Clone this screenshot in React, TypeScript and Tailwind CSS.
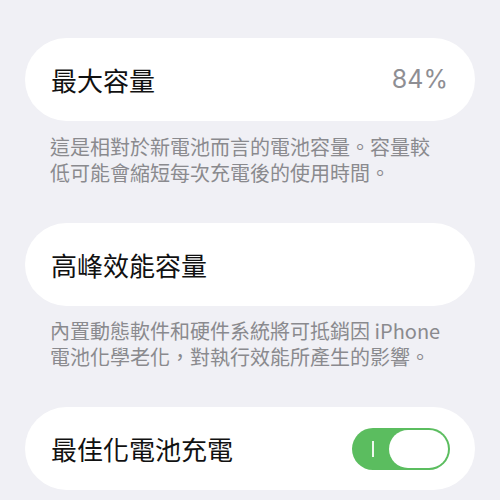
import React from "react";

const font = { fontFamily: '"Noto Sans CJK TC", "Noto Sans", sans-serif' };

export default function App() {
  return (
    <div
      className="w-[500px] h-[500px] overflow-hidden bg-[#f0f0f5] px-[25px] pt-[38px]"
      style={font}
    >
      <div className="h-[83px] rounded-[42px] bg-white flex items-center justify-between pl-[26px] pr-[27px]">
        <span className="text-[26px] leading-none text-[#111]">最大容量</span>
        <span className="text-[25px] leading-none text-[#8e8e93]" style={{ fontFamily: 'Inter, "Noto Sans", sans-serif' }}>84%</span>
      </div>
      <div className="mt-[13px] pl-[25px] text-[20px] leading-[26px] text-[#8a8a8e]">
        <div>這是相對於新電池而言的電池容量。容量較</div>
        <div>低可能會縮短每次充電後的使用時間。</div>
      </div>

      <div className="mt-[37px] h-[83px] rounded-[42px] bg-white flex items-center pl-[26px] pr-[27px]">
        <span className="text-[26px] leading-none text-[#111]">高峰效能容量</span>
      </div>
      <div className="mt-[12px] pl-[25px] text-[20px] leading-[26px] text-[#8a8a8e]">
        <div>內置動態軟件和硬件系統將可抵銷因 iPhone</div>
        <div>電池化學老化，對執行效能所產生的影響。</div>
      </div>

      <div className="mt-[37px] h-[83px] rounded-[42px] bg-white flex items-center justify-between pl-[26px] pr-[25px]">
        <span className="text-[26px] leading-none text-[#111]">最佳化電池充電</span>
        <div className="w-[98px] h-[42px] rounded-full bg-[#5bbd5f] flex items-center justify-between pl-[20px] pr-[2px]">
          <div className="w-[1.5px] h-[16px] bg-white/90" />
          <div className="w-[59px] h-[38px] rounded-full bg-white" />
        </div>
      </div>
    </div>
  );
}
